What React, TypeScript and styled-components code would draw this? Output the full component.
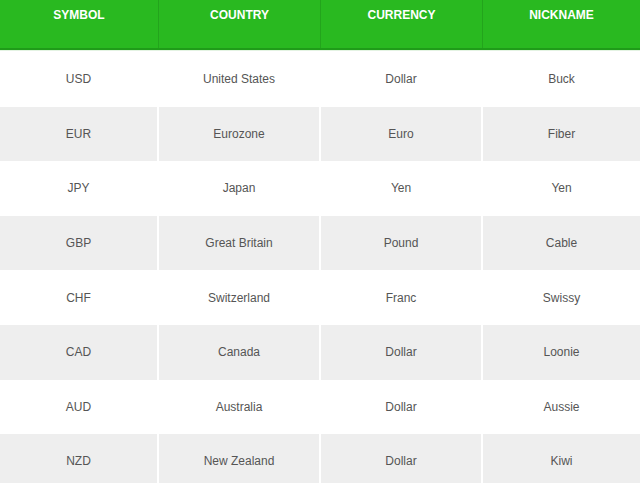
import React from "react";
import styled, { createGlobalStyle } from "styled-components";

const GlobalStyle = createGlobalStyle`
  html, body {
    margin: 0;
    padding: 0;
    background: #ffffff;
  }
  body {
    font-family: "Liberation Sans", Arial, sans-serif;
  }
`;

const rates = [
  ["USD", "United States", "Dollar", "Buck"],
  ["EUR", "Eurozone", "Euro", "Fiber"],
  ["JPY", "Japan", "Yen", "Yen"],
  ["GBP", "Great Britain", "Pound", "Cable"],
  ["CHF", "Switzerland", "Franc", "Swissy"],
  ["CAD", "Canada", "Dollar", "Loonie"],
  ["AUD", "Australia", "Dollar", "Aussie"],
  ["NZD", "New Zealand", "Dollar", "Kiwi"],
];

const Table = styled.div`
  width: 640px;
  display: flex;
  flex-direction: column;
`;

const HeadRow = styled.div`
  display: grid;
  grid-template-columns: 158px 161px 161px 157px;
  column-gap: 1px;
  background: #23a41c;
  border-bottom: 2px solid #1f9c19;
  box-shadow: 0 1px 0 #e4f3e3;
  margin-bottom: 2px;
`;

const HeadCell = styled.div`
  height: 48px;
  padding-top: 8px;
  box-sizing: border-box;
  text-align: center;
  color: #ffffff;
  font-size: 12px;
  font-weight: bold;
  line-height: 14px;
  text-transform: uppercase;
  background: #29b920;
`;

const Row = styled.div<{ $striped: boolean }>`
  display: grid;
  grid-template-columns: 157px 160px 160px 157px;
  column-gap: 2px;
  background: #ffffff;

  & > div {
    background: ${(p) => (p.$striped ? "#eeeeee" : "#ffffff")};
  }
`;

const Cell = styled.div`
  height: 54.6px;
  display: flex;
  align-items: center;
  justify-content: center;
  color: #555555;
  font-size: 12px;
`;

export default function App() {
  return (
    <>
      <GlobalStyle />
      <Table>
        <HeadRow>
          <HeadCell>Symbol</HeadCell>
          <HeadCell>Country</HeadCell>
          <HeadCell>Currency</HeadCell>
          <HeadCell>Nickname</HeadCell>
        </HeadRow>
        {rates.map((r, i) => (
          <Row key={r[0]} $striped={i % 2 === 1}>
            {r.map((v, j) => (
              <Cell key={j}>{v}</Cell>
            ))}
          </Row>
        ))}
      </Table>
    </>
  );
}
